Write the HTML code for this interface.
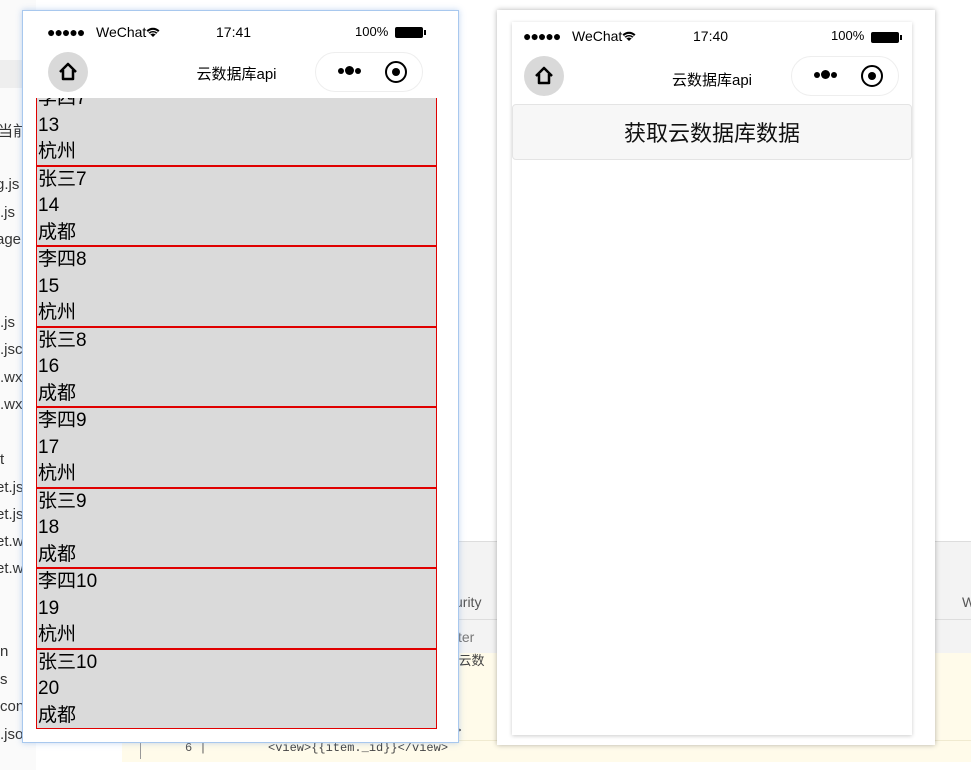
<!DOCTYPE html>
<html><head><meta charset="utf-8">
<style>
*{margin:0;padding:0;box-sizing:border-box}
body{width:971px;height:770px;overflow:hidden;background:#fff;position:relative;font-family:"Liberation Sans","Noto Sans CJK SC",sans-serif;color:#000}
.a{position:absolute}
.lt{position:absolute;left:0;font-size:15px;color:#333;white-space:nowrap}
.phone{position:absolute;background:#fff;overflow:hidden}
.sb{position:absolute;left:0;right:0;top:0;height:24px;font-size:14px}
.nav{position:absolute;left:0;right:0;top:24px;height:54px}
.home{position:absolute;left:12px;top:5px;width:40px;height:40px;border-radius:50%;background:#d9d9d9}
.cap{position:absolute;width:108px;height:40px;border:1px solid #eee;border-radius:20px;background:#fff}
.title{position:absolute;left:0;right:0;text-align:center;font-size:15px;top:17px}
.item{height:80.5px;border:1px solid #e00000;background:#dadada;font-size:19px;line-height:26.5px;padding-left:1px}
</style></head><body>
<div class="a" style="left:0;top:0;width:36px;height:770px;background:#fafafa"></div>
<div class="a" style="left:0;top:60px;width:36px;height:28px;background:#eeeeee"></div>
<div class="lt" style="top:120px;left:-2px">当前</div>
<div class="lt" style="top:176px;left:-4px">g.js</div>
<div class="lt" style="top:204px">.js</div>
<div class="lt" style="top:231px;left:-4px">age</div>
<div class="lt" style="top:314px">.js</div>
<div class="lt" style="top:341px">.jsc</div>
<div class="lt" style="top:369px">.wx</div>
<div class="lt" style="top:396px">.wx</div>
<div class="lt" style="top:451px">t</div>
<div class="lt" style="top:479px;left:-4px">et.js</div>
<div class="lt" style="top:506px;left:-4px">et.js</div>
<div class="lt" style="top:533px;left:-4px">et.w</div>
<div class="lt" style="top:560px;left:-4px">et.w</div>
<div class="lt" style="top:643px">n</div>
<div class="lt" style="top:671px">s</div>
<div class="lt" style="top:698px">con</div>
<div class="lt" style="top:726px">.jso</div>
<div class="a" style="left:440px;top:541px;width:531px;height:112px;background:#f3f3f3;border-top:1px solid #ddd"></div>
<div class="a" style="left:440px;top:619px;width:531px;height:1px;background:#ddd"></div>
<div class="a" style="left:455px;top:594px;font-size:14px;color:#555">urity</div>
<div class="a" style="left:458px;top:629px;font-size:14px;color:#777">ter</div>
<div class="a" style="left:962px;top:594px;font-size:14px;color:#555">W</div>
<div class="a" style="left:122px;top:653px;width:849px;height:117px;background:#fffbea"></div>
<div class="a" style="left:122px;top:740px;width:849px;height:1px;background:#f0ead0"></div>
<div class="a" style="left:122px;top:762px;width:849px;height:8px;background:#fff"></div>
<div class="a" style="left:140px;top:741px;width:1px;height:18px;background:#999"></div>
<div class="a" style="left:185px;top:741px;font-family:'Liberation Mono',monospace;font-size:12px;color:#555">6 |</div>
<div class="a" style="left:268px;top:741px;font-family:'Liberation Mono',monospace;font-size:12px;color:#444">&lt;view&gt;{{item._id}}&lt;/view&gt;</div>
<div class="a" style="left:440px;top:724px;font-family:'Liberation Mono',monospace;font-size:12px;color:#444">ew&gt;</div>
<div class="a" style="left:452px;top:650px;font-size:13px;color:#444">x云数</div>

<div class="a" style="left:22px;top:10px;width:437px;height:733px;background:#fff;border:1px solid #a8c8ee;box-shadow:0 0 6px rgba(100,150,220,.4)"></div>
<div class="phone" style="left:36px;top:18px;width:401px;height:712px;background:#fff">
  <div class="a" style="left:0;top:80px;width:401px;">
    <div style="margin-top:-13px">
      <div class="item">李四7<br>13<br>杭州</div>
      <div class="item">张三7<br>14<br>成都</div>
      <div class="item">李四8<br>15<br>杭州</div>
      <div class="item">张三8<br>16<br>成都</div>
      <div class="item">李四9<br>17<br>杭州</div>
      <div class="item">张三9<br>18<br>成都</div>
      <div class="item">李四10<br>19<br>杭州</div>
      <div class="item">张三10<br>20<br>成都</div>
    </div>
  </div>
  <div class="a" style="left:0;top:0;width:401px;height:80px;background:#fff;overflow:hidden">
    <div class="sb" style="top:6px"><span class="a" style="left:11px;letter-spacing:-1px">●●●●●</span><span class="a" style="left:60px">WeChat</span><svg class="a" style="left:110px;top:3px" width="14" height="11" viewBox="0 0 14 11"><path d="M7 10 L0.5 3.5 A9 9 0 0 1 13.5 3.5 Z" fill="#000"/><path d="M2.5 5.2 A6.5 6.5 0 0 1 11.5 5.2 M4.3 7 A4 4 0 0 1 9.7 7" stroke="#fff" stroke-width="1.1" fill="none"/></svg><span class="a" style="left:180px">17:41</span><span class="a" style="left:319px;font-size:13px">100%</span><span class="a" style="left:359px;top:3px;width:28px;height:11px;border:1px solid #000;background:#000;border-radius:2px"></span><span class="a" style="left:388px;top:6px;width:2px;height:5px;background:#000"></span></div>
    <div class="nav" style="top:29px"><div class="home"><svg width="40" height="40" viewBox="0 0 40 40"><path d="M12 20 L20 12 L28 20 M15 18 V27 H25 V18" fill="none" stroke="#000" stroke-width="2.5" stroke-linejoin="round"/></svg></div>
      <div class="title" style="top:16px">云数据库api</div>
      <div class="cap" style="left:279px;top:5px"><span class="a" style="left:22px;top:15px;width:6px;height:6px;border-radius:50%;background:#000"></span><span class="a" style="left:29px;top:13px;width:9px;height:9px;border-radius:50%;background:#000"></span><span class="a" style="left:39px;top:15px;width:6px;height:6px;border-radius:50%;background:#000"></span><span class="a" style="left:69px;top:8px;width:22px;height:22px;border-radius:50%;border:2.5px solid #000"></span><span class="a" style="left:76px;top:15px;width:8px;height:8px;border-radius:50%;background:#000"></span></div>
    </div>
  </div>
</div>

<div class="a" style="left:497px;top:10px;width:438px;height:735px;background:#fff;box-shadow:0 0 5px rgba(0,0,0,.3)"></div>
<div class="phone" style="left:512px;top:22px;width:400px;height:713px;background:#fff;box-shadow:0 1px 4px rgba(0,0,0,.2)">
  <div class="sb" style="top:6px"><span class="a" style="left:11px;letter-spacing:-1px">●●●●●</span><span class="a" style="left:60px">WeChat</span><svg class="a" style="left:110px;top:3px" width="14" height="11" viewBox="0 0 14 11"><path d="M7 10 L0.5 3.5 A9 9 0 0 1 13.5 3.5 Z" fill="#000"/><path d="M2.5 5.2 A6.5 6.5 0 0 1 11.5 5.2 M4.3 7 A4 4 0 0 1 9.7 7" stroke="#fff" stroke-width="1.1" fill="none"/></svg><span class="a" style="left:181px">17:40</span><span class="a" style="left:319px;font-size:13px">100%</span><span class="a" style="left:359px;top:4px;width:28px;height:11px;border:1px solid #000;background:#000;border-radius:2px"></span><span class="a" style="left:388px;top:7px;width:2px;height:5px;background:#000"></span></div>
  <div class="nav" style="top:30px"><div class="home" style="top:4px"><svg width="40" height="40" viewBox="0 0 40 40"><path d="M12 20 L20 12 L28 20 M15 18 V27 H25 V18" fill="none" stroke="#000" stroke-width="2.5" stroke-linejoin="round"/></svg></div>
    <div class="title" style="top:17px">云数据库api</div>
    <div class="cap" style="left:279px;top:4px"><span class="a" style="left:22px;top:15px;width:6px;height:6px;border-radius:50%;background:#000"></span><span class="a" style="left:29px;top:13px;width:9px;height:9px;border-radius:50%;background:#000"></span><span class="a" style="left:39px;top:15px;width:6px;height:6px;border-radius:50%;background:#000"></span><span class="a" style="left:69px;top:8px;width:22px;height:22px;border-radius:50%;border:2.5px solid #000"></span><span class="a" style="left:76px;top:15px;width:8px;height:8px;border-radius:50%;background:#000"></span></div>
  </div>
  <div class="a" style="left:0;top:82px;width:400px;height:56px;background:#f7f7f7;border:1px solid #e4e4e4;border-radius:4px;text-align:center;font-size:22px;line-height:58px;color:#111">获取云数据库数据</div>
</div>
</body></html>
